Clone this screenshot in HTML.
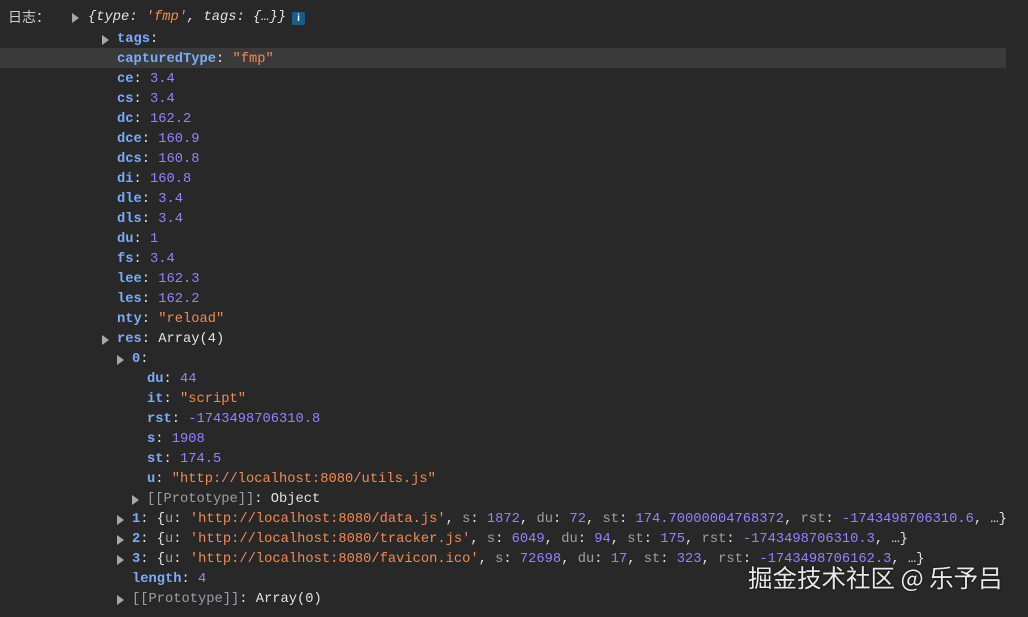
<!DOCTYPE html>
<html><head><meta charset="utf-8"><style>
body{margin:0;width:1028px;height:611px;background:#282828;overflow:hidden;position:relative;font-family:"Liberation Mono",monospace;font-size:13.75px;color:#e3e3e3}
.w{position:absolute;left:0;top:6px;width:1028px;height:611px}
.r{position:absolute;height:20px;line-height:20px;white-space:pre}
.k{color:#7cacf8;font-weight:bold}
.n{color:#9980ff}
.s{color:#f28b54}
.g{color:#9aa0a6}
.t{position:absolute;width:0;height:0;border-left:7px solid #a8a8a8;border-top:5px solid transparent;border-bottom:5px solid transparent}
.hl{position:absolute;left:0;top:48px;width:1006px;height:20px;background:#3a3a3a}
</style></head><body>
<div class="hl"></div>
<div class="w">
<div class="r" style="left:8px;top:1px;font-family:'Noto Sans CJK SC',sans-serif;font-size:14px;color:#d0d0d0">日志：</div>
<div class="t" style="left:72px;top:7px"></div>
<div class="r" style="left:88px;top:2px;font-style:italic">{type: <span class="s">'fmp'</span>, tags: {…}}</div>
<div style="position:absolute;left:292px;top:6px;width:13px;height:13px;background:#1a5c8e;color:#fff;font:bold 10px 'Liberation Sans',sans-serif;text-align:center;line-height:13px;border-radius:2px">i</div>
<div class="t" style="left:102px;top:29px"></div>
<div class="r" style="left:117px;top:24px"><span class="k">tags</span>:</div>
<div class="r" style="left:117px;top:44px"><span class="k">capturedType</span>: <span class="s">"fmp"</span></div>
<div class="r" style="left:117px;top:64px"><span class="k">ce</span>: <span class="n">3.4</span></div>
<div class="r" style="left:117px;top:84px"><span class="k">cs</span>: <span class="n">3.4</span></div>
<div class="r" style="left:117px;top:104px"><span class="k">dc</span>: <span class="n">162.2</span></div>
<div class="r" style="left:117px;top:124px"><span class="k">dce</span>: <span class="n">160.9</span></div>
<div class="r" style="left:117px;top:144px"><span class="k">dcs</span>: <span class="n">160.8</span></div>
<div class="r" style="left:117px;top:164px"><span class="k">di</span>: <span class="n">160.8</span></div>
<div class="r" style="left:117px;top:184px"><span class="k">dle</span>: <span class="n">3.4</span></div>
<div class="r" style="left:117px;top:204px"><span class="k">dls</span>: <span class="n">3.4</span></div>
<div class="r" style="left:117px;top:224px"><span class="k">du</span>: <span class="n">1</span></div>
<div class="r" style="left:117px;top:244px"><span class="k">fs</span>: <span class="n">3.4</span></div>
<div class="r" style="left:117px;top:264px"><span class="k">lee</span>: <span class="n">162.3</span></div>
<div class="r" style="left:117px;top:284px"><span class="k">les</span>: <span class="n">162.2</span></div>
<div class="r" style="left:117px;top:304px"><span class="k">nty</span>: <span class="s">"reload"</span></div>
<div class="t" style="left:102px;top:329px"></div>
<div class="r" style="left:117px;top:324px"><span class="k">res</span>: Array(4)</div>
<div class="t" style="left:117px;top:349px"></div>
<div class="r" style="left:132px;top:344px"><span class="k">0</span>:</div>
<div class="r" style="left:147px;top:364px"><span class="k">du</span>: <span class="n">44</span></div>
<div class="r" style="left:147px;top:384px"><span class="k">it</span>: <span class="s">"script"</span></div>
<div class="r" style="left:147px;top:404px"><span class="k">rst</span>: <span class="n">-1743498706310.8</span></div>
<div class="r" style="left:147px;top:424px"><span class="k">s</span>: <span class="n">1908</span></div>
<div class="r" style="left:147px;top:444px"><span class="k">st</span>: <span class="n">174.5</span></div>
<div class="r" style="left:147px;top:464px"><span class="k">u</span>: <span class="s">"http://localhost:8080/utils.js"</span></div>
<div class="t" style="left:132px;top:489px"></div>
<div class="r" style="left:147px;top:484px"><span class="g">[[Prototype]]</span>: Object</div>
<div class="t" style="left:117px;top:509px"></div>
<div class="r" style="left:132px;top:504px"><span class="k">1</span>: {<span class="g">u</span>: <span class="s">'http://localhost:8080/data.js'</span>, <span class="g">s</span>: <span class="n">1872</span>, <span class="g">du</span>: <span class="n">72</span>, <span class="g">st</span>: <span class="n">174.70000004768372</span>, <span class="g">rst</span>: <span class="n">-1743498706310.6</span>, …}</div>
<div class="t" style="left:117px;top:529px"></div>
<div class="r" style="left:132px;top:524px"><span class="k">2</span>: {<span class="g">u</span>: <span class="s">'http://localhost:8080/tracker.js'</span>, <span class="g">s</span>: <span class="n">6049</span>, <span class="g">du</span>: <span class="n">94</span>, <span class="g">st</span>: <span class="n">175</span>, <span class="g">rst</span>: <span class="n">-1743498706310.3</span>, …}</div>
<div class="t" style="left:117px;top:549px"></div>
<div class="r" style="left:132px;top:544px"><span class="k">3</span>: {<span class="g">u</span>: <span class="s">'http://localhost:8080/favicon.ico'</span>, <span class="g">s</span>: <span class="n">72698</span>, <span class="g">du</span>: <span class="n">17</span>, <span class="g">st</span>: <span class="n">323</span>, <span class="g">rst</span>: <span class="n">-1743498706162.3</span>, …}</div>
<div class="r" style="left:132px;top:564px"><span class="k">length</span>: <span class="n">4</span></div>
<div class="t" style="left:117px;top:589px"></div>
<div class="r" style="left:132px;top:584px"><span class="g">[[Prototype]]</span>: Array(0)</div>
</div>
<div class="r" style="left:748px;top:561px;height:34px;line-height:34px;font-family:'Noto Sans CJK SC',sans-serif;font-size:24.5px;color:#e8e8e8;text-shadow:0 0 2px #000">掘金技术社区 @ 乐予吕</div>
</body></html>
